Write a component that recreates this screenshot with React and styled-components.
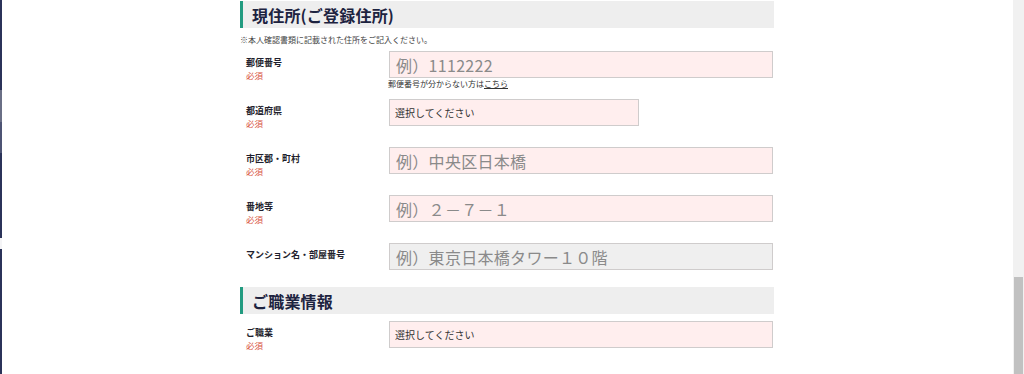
import React from 'react';
import styled, { createGlobalStyle } from 'styled-components';

const GlobalStyle = createGlobalStyle`
  html, body {
    margin: 0;
    padding: 0;
    background: #fff;
    font-family: "Noto Sans CJK JP", "Noto Sans", sans-serif;
    color: #222;
  }
`;

const Screen = styled.div`
  display: flex;
  width: 1024px;
  height: 374px;
  overflow: hidden;
`;

//Left window edge
const EdgeStrip = styled.div`
  display: flex;
  flex-direction: column;
  width: 2px;
  flex-shrink: 0;
`;

const EdgeSegment = styled.div`
  height: ${(props) => props.$h}px;
  background: ${(props) => props.$color};
`;

const Main = styled.main`
  flex: 1;
  display: flex;
  justify-content: center;
  padding: 1px 1px 0 0;
`;

const Form = styled.div`
  width: 534px;
  display: flex;
  flex-direction: column;
`;

const SectionTitle = styled.h2`
  margin: 0 0 ${(props) => props.$gap}px;
  height: 27px;
  display: flex;
  align-items: center;
  background: #eeeeee;
  border-left: 3px solid #229b80;
  padding-left: 9px;
  font-size: 16px;
  font-weight: 700;
  color: #1d2340;
  letter-spacing: 0.2px;
`;

const Note = styled.p`
  margin: 0 0 5px;
  font-size: 8px;
  line-height: 12px;
  color: #444;
`;

const Rows = styled.div`
  display: flex;
  flex-direction: column;
  gap: 4px;
`;

const Row = styled.div`
  display: grid;
  grid-template-columns: 143px 1fr;
  align-items: start;
  min-height: 44px;
  padding: 0 1px 0 6px;
`;

const LabelBox = styled.div`
  padding-top: 6px;
  display: flex;
  flex-direction: column;
`;

const LabelText = styled.span`
  font-size: 9px;
  line-height: 12px;
  font-weight: 700;
  color: #1f1f2e;
`;

const Required = styled.span`
  font-size: 8.5px;
  line-height: 12px;
  color: #d8533d;
`;

const Field = styled.div`
  display: flex;
  flex-direction: column;
`;

const TextInput = styled.input`
  box-sizing: border-box;
  width: ${(props) => props.$width || '100%'};
  height: 27px;
  margin: 0;
  padding: 0 6px;
  border: 1px solid #cfcccc;
  border-radius: 0;
  background: ${(props) => (props.$optional ? '#efefef' : '#ffeeee')};
  font-family: "Noto Sans CJK JP", sans-serif;
  font-size: 16px;
  letter-spacing: 0.3px;
  color: #333;
  outline: none;

  &::placeholder {
    color: #8a8a8a;
  }
`;

const Select = styled.select`
  box-sizing: border-box;
  width: ${(props) => props.$width || '100%'};
  height: 27px;
  margin: 0;
  padding: 0 5px;
  border: 1px solid #cfcccc;
  border-radius: 0;
  background: #ffeeee;
  appearance: none;
  -webkit-appearance: none;
  font-family: "Noto Sans CJK JP", sans-serif;
  font-size: 10px;
  color: #333;
  outline: none;
`;

const SubNote = styled.p`
  margin: 1px 0 0 -1px;
  font-size: 8px;
  line-height: 10px;
  color: #333;

  a {
    color: #333;
    text-decoration: underline;
  }
`;

const SectionTwo = styled.section`
  display: flex;
  flex-direction: column;
`;

//Fake browser scrollbar
const ScrollTrack = styled.div`
  width: 11px;
  flex-shrink: 0;
  background: #f1f1f1;
  display: flex;
  flex-direction: column;
  justify-content: flex-end;
  align-items: flex-end;
`;

const ScrollThumb = styled.div`
  width: 9px;
  height: 97px;
  background: #c1c1c1;
  margin-right: 1px;
`;

function FormRow({ label, required, children }) {
  return (
    <Row>
      <LabelBox>
        <LabelText>{label}</LabelText>
        {required && <Required>必須</Required>}
      </LabelBox>
      <Field>{children}</Field>
    </Row>
  );
}

export default function App() {
  return (
    <>
      <GlobalStyle />
      <Screen>
        <EdgeStrip>
          <EdgeSegment $h={90} $color="#2b3359" />
          <EdgeSegment $h={32} $color="#6a6f86" />
          <EdgeSegment $h={31} $color="#4d5474" />
          <EdgeSegment $h={85} $color="#2b3359" />
          <EdgeSegment $h={11} $color="#f4f4f6" />
          <EdgeSegment $h={125} $color="#2b3359" />
        </EdgeStrip>
        <Main>
          <Form>
            <SectionTitle $gap={6}>現住所(ご登録住所)</SectionTitle>
            <Note>※本人確認書類に記載された住所をご記入ください。</Note>
            <Rows>
              <FormRow label="郵便番号" required>
                <TextInput placeholder="例）1112222" />
                <SubNote>
                  郵便番号が分からない方は<a href="#">こちら</a>
                </SubNote>
              </FormRow>
              <FormRow label="都道府県" required>
                <Select $width="250px" defaultValue="">
                  <option value="">選択してください</option>
                </Select>
              </FormRow>
              <FormRow label="市区郡・町村" required>
                <TextInput placeholder="例）中央区日本橋" />
              </FormRow>
              <FormRow label="番地等" required>
                <TextInput placeholder="例）２－７－１" />
              </FormRow>
              <FormRow label="マンション名・部屋番号">
                <TextInput $optional placeholder="例）東京日本橋タワー１０階" />
              </FormRow>
            </Rows>
            <SectionTwo>
              <SectionTitle $gap={7}>ご職業情報</SectionTitle>
              <Rows>
                <FormRow label="ご職業" required>
                  <Select defaultValue="">
                    <option value="">選択してください</option>
                  </Select>
                </FormRow>
              </Rows>
            </SectionTwo>
          </Form>
        </Main>
        <ScrollTrack>
          <ScrollThumb />
        </ScrollTrack>
      </Screen>
    </>
  );
}
